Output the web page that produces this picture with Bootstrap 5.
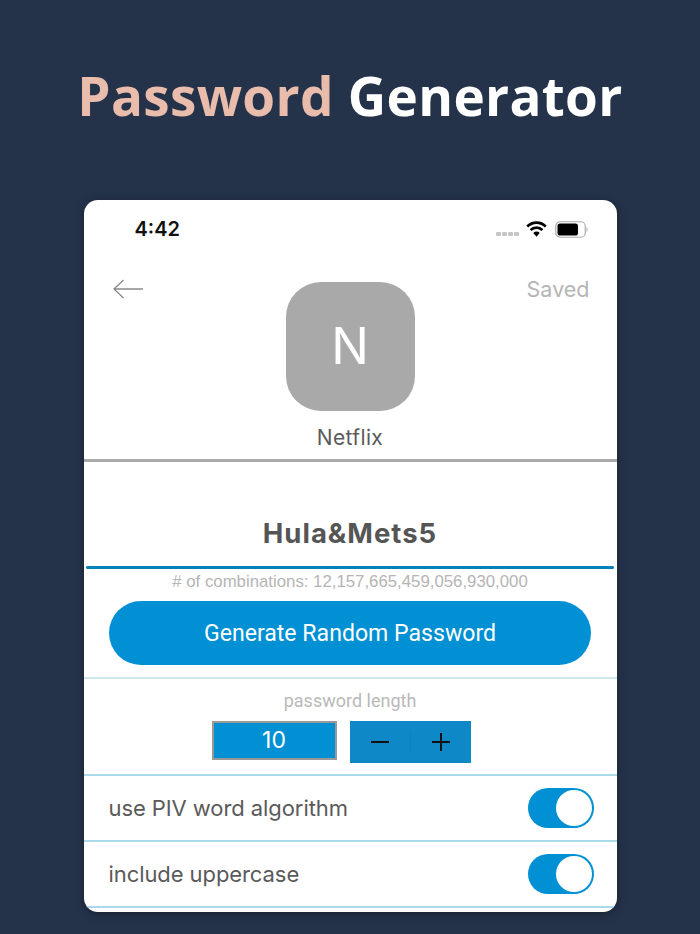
<!DOCTYPE html>
<html lang="en">
<head>
    <meta charset="UTF-8">
    <meta name="viewport" content="width=device-width, initial-scale=1.0">
    <title>Password Generator</title>
    <link rel="stylesheet" href="https://cdn.jsdelivr.net/npm/bootstrap@5.3.0/dist/css/bootstrap.min.css">
    <style>
        html, body { height: 100%; }
        body {
            background-color: #24324a;
            overflow: hidden;
            font-family: "Inter", "Liberation Sans", sans-serif;
        }
        .hero-title {
            font-family: "Open Sans", sans-serif;
            font-weight: 700;
            font-size: 53px;
            line-height: 70px;
            letter-spacing: .33px;
            color: #fff;
            padding-top: 61px;
            margin-bottom: 69px;
        }
        .hero-accent { color: #e9bcab; }
        .phone {
            width: 533px;
            height: 712px;
            background: #fff;
            border-radius: 14px;
            overflow: hidden;
            box-shadow: 0 2px 8px rgba(0, 0, 0, 0.35);
        }
        .status-bar { height: 58px; padding: 0 28px 0 51px; }
        .clock { font-weight: 600; font-size: 20px; color: #111; }
        .signal-dots { gap: 1px; margin: 10px 7px 0 0; }
        .signal-dot { width: 5px; height: 4px; background: #c6c6c6; border-radius: 1px; }
        .top-area {
            display: grid;
            grid-template-columns: 1fr auto 1fr;
            height: 204px;
            padding: 0 27px;
            border-bottom: 3px solid #aaa;
        }
        .saved { font-size: 21.5px; color: #b5b5b5; line-height: 24px; margin-top: 19px; }
        .back-arrow { margin: 21px 0 0 2px; }
        .app-tile {
            width: 129px;
            height: 129px;
            border-radius: 35px;
            background: #a9a9a9;
            color: #fff;
            font-size: 50px;
            font-weight: 400;
            margin-top: 24px;
        }
        .app-name { font-size: 21px; line-height: 24px; color: #5a5a5a; margin-top: 15px; letter-spacing: .35px; }
        .pw-text { font-size: 27.5px; font-weight: 700; letter-spacing: 1px; color: #555; line-height: 36px; margin-top: 53px; }
        .pw-line { height: 3px; margin: 15px 3px 0 2px; background: #0582b8; border-radius: 2px; }
        .combos { font-family: "Liberation Sans", sans-serif; font-size: 16.8px; line-height: 20px; color: #b5b5b5; margin-top: 3px; }
        .gen-btn {
            display: block;
            width: 482px;
            height: 64px;
            margin: 9px auto 0;
            padding-top: 8px;
            border-radius: 32px;
            background: #0090d3;
            border: 0;
            color: #fff;
            font-family: "Roboto", sans-serif;
            font-size: 23.1px;
        }
        .length-area { height: 99px; margin-top: 12px; border-top: 2px solid #cfe6ec; border-bottom: 2px solid #a9d9ea; }
        .length-label { font-family: "Roboto", sans-serif; font-size: 18px; line-height: 22px; color: #b9b9b9; margin-top: 11px; }
        .length-controls { gap: 13px; margin: 9px 18px 0 0; }
        .length-box {
            width: 125px;
            height: 39px;
            background: #0090d3;
            border: 2px solid #999;
            color: #fff;
            font-size: 23px;
            line-height: 34px;
        }
        .stepper { width: 121px; height: 42px; background: #0e88c6; }
        .stepper-half { width: 60px; height: 100%; }
        .stepper-sep { width: 1px; height: 20px; background: #0d82bd; }
        .opt-row { height: 66px; padding: 0 23px 0 25px; border-bottom: 2px solid #a9d9ea; }
        .opt-label { font-size: 22px; color: #5a5a5a; letter-spacing: -.08px; }
        .toggle-pill {
            width: 66px;
            height: 40px;
            margin-bottom: 1px;
            border-radius: 20px;
            background: #0090d3;
            padding: 2px;
        }
        .toggle-knob { width: 36px; height: 36px; border-radius: 50%; background: #fff; }
    </style>
</head>
<body>
    <h1 class="hero-title text-center">
        <span class="hero-accent">Password</span> Generator
    </h1>

    <div class="phone mx-auto">
        <!-- status bar -->
        <div class="status-bar d-flex align-items-center justify-content-between">
            <span class="clock">4:42</span>
            <div class="d-flex align-items-center">
                <div class="signal-dots d-flex">
                    <span class="signal-dot"></span><span class="signal-dot"></span><span class="signal-dot"></span><span class="signal-dot"></span>
                </div>
                <svg width="21" height="16" viewBox="0 0 21 16" class="me-2">
                    <path d="M1.2 5.5a13 13 0 0 1 18.6 0" fill="none" stroke="#000" stroke-width="2.6"/>
                    <path d="M4.6 9.2a8 8 0 0 1 11.8 0" fill="none" stroke="#000" stroke-width="2.6"/>
                    <path d="M10.5 15.8l-3.2-3.8a4.4 4.4 0 0 1 6.4 0z" fill="#000"/>
                </svg>
                <svg width="34" height="17" viewBox="0 0 34 17">
                    <rect x=".75" y=".75" width="29.5" height="15.5" rx="4.5" fill="none" stroke="#aaa" stroke-width="1.2"/>
                    <rect x="2.5" y="2.5" width="20.5" height="12" rx="2.6" fill="#000"/>
                    <path d="M31.5 6c1.4.4 1.4 4.6 0 5z" fill="#aaa"/>
                </svg>
            </div>
        </div>

        <!-- header with app tile -->
        <div class="top-area">
            <svg class="back-arrow" width="30" height="20" viewBox="0 0 30 20">
                <path d="M30 10H1M10.5 1L1 10l9.5 9" fill="none" stroke="#8a8a8a" stroke-width="1.3"/>
            </svg>
            <div class="text-center">
                <div class="app-tile d-flex align-items-center justify-content-center">N</div>
                <div class="app-name">Netflix</div>
            </div>
            <span class="saved text-end">Saved</span>
        </div>

        <!-- generated password -->
        <div class="text-center">
            <div class="pw-text">Hula&amp;Mets5</div>
            <div class="pw-line"></div>
            <div class="combos"># of combinations: 12,157,665,459,056,930,000</div>
        </div>
        <button type="button" class="btn gen-btn">Generate Random Password</button>

        <!-- length -->
        <div class="length-area text-center">
            <div class="length-label">password length</div>
            <div class="length-controls d-flex justify-content-center align-items-start">
                <div class="length-box">10</div>
                <div class="stepper d-flex align-items-center">
                    <div class="stepper-half d-flex align-items-center justify-content-center">
                        <svg width="20" height="20" viewBox="0 0 20 20"><path d="M1 10h18" stroke="#111" stroke-width="2"/></svg>
                    </div>
                    <div class="stepper-sep"></div>
                    <div class="stepper-half d-flex align-items-center justify-content-center">
                        <svg width="20" height="20" viewBox="0 0 20 20"><path d="M1 10h18M10 1v18" stroke="#111" stroke-width="2"/></svg>
                    </div>
                </div>
            </div>
        </div>

        <!-- options -->
        <div class="opt-row d-flex align-items-center justify-content-between">
            <span class="opt-label">use PIV word algorithm</span>
            <div class="toggle-pill d-flex justify-content-end"><div class="toggle-knob"></div></div>
        </div>
        <div class="opt-row d-flex align-items-center justify-content-between">
            <span class="opt-label">include uppercase</span>
            <div class="toggle-pill d-flex justify-content-end"><div class="toggle-knob"></div></div>
        </div>
    </div>

    <script src="https://cdn.jsdelivr.net/npm/bootstrap@5.3.0/dist/js/bootstrap.bundle.min.js"></script>
</body>
</html>
